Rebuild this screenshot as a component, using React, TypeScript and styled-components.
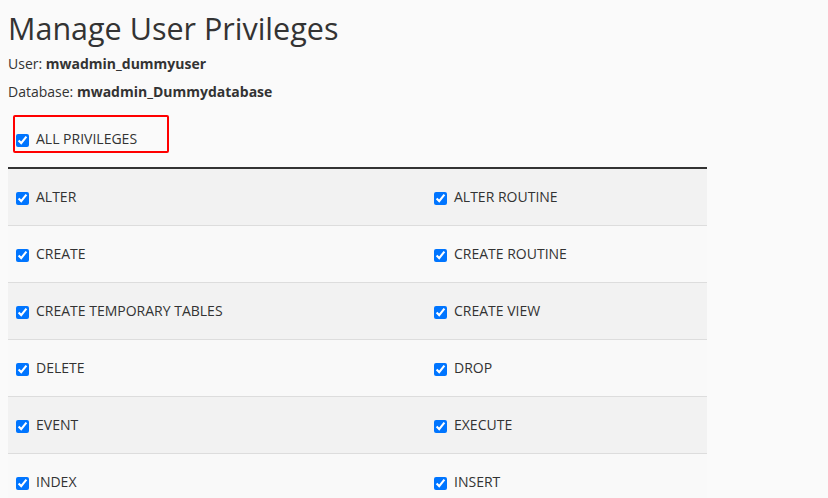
import React from "react";
import styled, { createGlobalStyle } from "styled-components";

const Global = createGlobalStyle`
  html, body {
    margin: 0;
    padding: 0;
    background: #fafafa;
    font-family: "Open Sans", "Liberation Sans", sans-serif;
    color: #333333;
  }
  * { box-sizing: border-box; }
`;

const Page = styled.div`
  padding: 0 8px;
`;

const Title = styled.h1`
  margin: 0;
  padding-top: 10px;
  font-size: 30.5px;
  line-height: 36px;
  font-weight: 400;
  color: #333333;
`;

const Info = styled.p<{ $top: number }>`
  margin: ${(p) => p.$top}px 0 0 0;
  font-size: 14px;
  line-height: 20px;
  color: #333333;
`;

const Strong = styled.strong`
  font-weight: 700;
`;

const Highlight = styled.div`
  margin: 13px 0 0 5px;
  width: 156px;
  height: 38px;
  border: 2px solid #ff0000;
  border-radius: 2px;
  padding: 12px 0 0 1px;
`;

const CheckLabel = styled.label`
  display: flex;
  align-items: center;
  gap: 7px;
  font-size: 14px;
  line-height: 20px;
  color: #333333;
  white-space: nowrap;
`;

const Box = styled.input`
  margin: 2px 0 0 0;
  width: 13px;
  height: 13px;
  flex: none;
`;

const Table = styled.div`
  margin-top: 14px;
  width: 699px;
  border-top: 2px solid #333333;
`;

const Row = styled.div<{ $odd: boolean }>`
  display: grid;
  grid-template-columns: 418px 1fr;
  height: 57px;
  border-bottom: 1px solid #dddddd;
  background: ${(p) => (p.$odd ? "#f2f2f2" : "#f9f9f9")};
`;

const Cell = styled.div`
  display: flex;
  align-items: center;
  padding-left: 8px;
`;

const rows: [string, string][] = [
  ["ALTER", "ALTER ROUTINE"],
  ["CREATE", "CREATE ROUTINE"],
  ["CREATE TEMPORARY TABLES", "CREATE VIEW"],
  ["DELETE", "DROP"],
  ["EVENT", "EXECUTE"],
  ["INDEX", "INSERT"],
];

const Check = ({ label }: { label: string }) => (
  <CheckLabel>
    <Box type="checkbox" checked readOnly />
    {label}
  </CheckLabel>
);

export default function App() {
  return (
    <Page>
      <Global />
      <Title>Manage User Privileges</Title>
      <Info $top={8}>
        User: <Strong>mwadmin_dummyuser</Strong>
      </Info>
      <Info $top={8}>
        Database: <Strong>mwadmin_Dummydatabase</Strong>
      </Info>
      <Highlight>
        <Check label="ALL PRIVILEGES" />
      </Highlight>
      <Table>
        {rows.map(([a, b], i) => (
          <Row key={a} $odd={i % 2 === 0}>
            <Cell>
              <Check label={a} />
            </Cell>
            <Cell>
              <Check label={b} />
            </Cell>
          </Row>
        ))}
      </Table>
    </Page>
  );
}
